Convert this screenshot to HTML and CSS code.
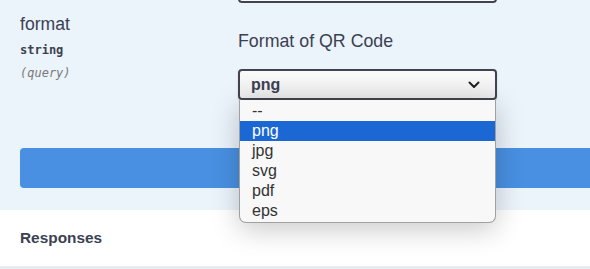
FILE: index.html
```html
<!DOCTYPE html>
<html lang="en">

<head>
    <meta charset="UTF-8">
    <meta name="viewport" content="width=device-width, initial-scale=1.0">
    <title>format parameter</title>
    <link rel="stylesheet" href="styles.css">
</head>

<body>
    <section class="opblock">
        <div class="param">
            <div class="param-name">
                <div class="name">format</div>
                <div class="type">string</div>
                <div class="in">(query)</div>
            </div>
            <div class="param-desc">
                <div class="prev-input"></div>
                <p class="desc">Format of QR Code</p>
                <div class="select-wrap">
                    <div class="select">
                        <span>png</span>
                        <svg class="chev" width="12" height="8" viewBox="0 0 12 8">
                            <path d="M1.5 1.5 L6 6 L10.5 1.5" fill="none" stroke="#222" stroke-width="2" stroke-linecap="round" stroke-linejoin="round" />
                        </svg>
                    </div>
                    <ul class="options">
                        <li>--</li>
                        <li class="selected">png</li>
                        <li>jpg</li>
                        <li>svg</li>
                        <li>pdf</li>
                        <li>eps</li>
                    </ul>
                </div>
            </div>
        </div>
        <div class="execute"></div>
    </section>
    <section class="responses">
        <h4>Responses</h4>
    </section>
    <div class="below"></div>
</body></html>
```

FILE: styles.css
```css
body {
    margin: 0;
    background-color: #fff;
    font-family: "Liberation Sans", Arial, sans-serif;
    color: #3b4151;
    overflow: hidden;
}

.opblock {
    height: 210px;
    padding-left: 20px;
    background-color: #ebf3fb;
    box-sizing: border-box;
}

.param {
    display: grid;
    grid-template-columns: 218px 259px;
}

.param-name {
    padding-top: 12px;
}

.name {
    font-size: 17.6px;
    line-height: 24px;
}

.type {
    margin-top: 7px;
    font-family: "DejaVu Sans Mono", monospace;
    font-size: 12px;
    font-weight: 600;
    line-height: 14px;
}

.in {
    margin-top: 9px;
    font-family: "DejaVu Sans Mono", monospace;
    font-size: 12px;
    font-style: italic;
    color: #7a7a7a;
    line-height: 14px;
}

.prev-input {
    height: 30px;
    margin-top: -27px;
    border: 2px solid #41444e;
    border-radius: 4px;
    background-color: #fafafa;
    box-sizing: border-box;
}

.desc {
    margin: 27px 0 0;
    font-size: 17.8px;
    line-height: 22px;
}

.select-wrap {
    position: relative;
    margin-top: 17px;
}

.select {
    display: flex;
    justify-content: space-between;
    align-items: center;
    height: 31px;
    padding: 0 12px 0 11px;
    border: 2px solid #41444e;
    border-radius: 4px;
    background: linear-gradient(#fafafa, #ececec);
    box-sizing: border-box;
    font-size: 16px;
    font-weight: 700;
    box-shadow: 0 1px 2px rgba(0, 0, 0, .15);
}

.chev {
    margin-right: 3px;
}

.options {
    position: absolute;
    top: 31px;
    left: 1px;
    right: 1px;
    margin: 0;
    padding: 0 0 1px;
    list-style: none;
    background-color: #f8f8f8;
    border: 1px solid #a0a0a0;
    border-top: 0;
    border-radius: 0 0 7px 7px;
    box-shadow: 0 6px 28px rgba(0, 0, 0, .22);
    font-size: 16px;
    color: #333;
}

.options li {
    height: 20px;
    line-height: 20px;
    padding-left: 12px;
}

.options li:first-child {
    margin-top: 1px;
}

.options .selected {
    background-color: #1b68d4;
    color: #fff;
}

.execute {
    height: 40px;
    margin-top: 48px;
    border-radius: 4px 0 0 4px;
    background-color: #4990e2;
}

.responses {
    height: 56px;
    padding: 0 20px;
    display: flex;
    align-items: center;
    background-color: #fff;
}

.responses h4 {
    margin: 0;
    font-size: 15.4px;
    font-weight: 700;
}

.below {
    height: 10px;
    background-color: #e8ecf1;
}
```
